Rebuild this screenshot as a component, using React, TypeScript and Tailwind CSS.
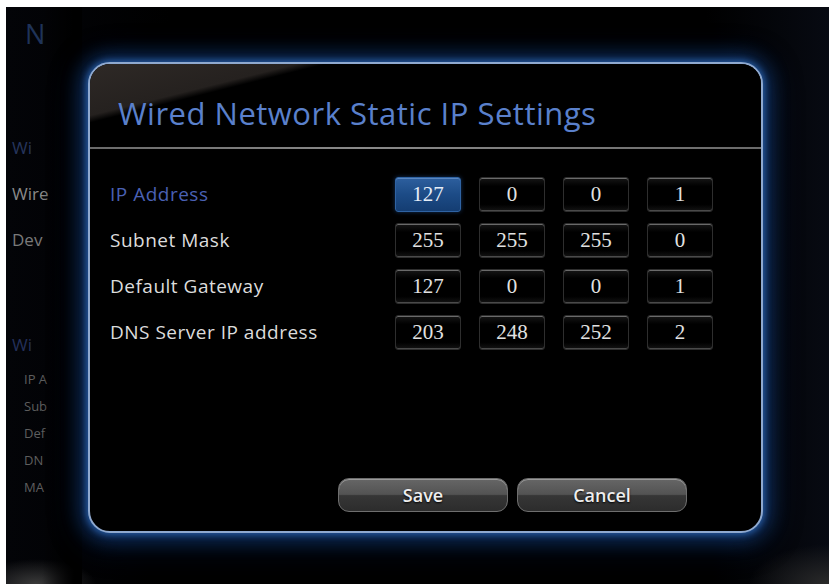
import React from "react";

const rows: { label: string; values: string[]; active?: boolean }[] = [
  { label: "IP Address", values: ["127", "0", "0", "1"], active: true },
  { label: "Subnet Mask", values: ["255", "255", "255", "0"] },
  { label: "Default Gateway", values: ["127", "0", "0", "1"] },
  { label: "DNS Server IP address", values: ["203", "248", "252", "2"] },
];

function Box({ value, selected }: { value: string; selected?: boolean }) {
  return (
    <div
      className={
        selected
          ? "h-[35px] rounded-[3px] border border-[#2f63a3] bg-[linear-gradient(#2d5f9e,#1c4b86_50%,#143d72)] shadow-[inset_0_1px_0_#5a86c0,0_0_4px_rgba(40,100,180,0.5)] flex items-center justify-center text-[21px] text-[#e6eef8] font-['Liberation_Serif',serif]"
          : "h-[35px] rounded-[3px] border border-[#2e2e2e] bg-[linear-gradient(#161616,#000_25%,#000_80%,#141414)] shadow-[inset_0_1px_0_#6a6a6a,inset_0_-1px_0_#4a4a4a] flex items-center justify-center text-[21px] text-[#e2e2e2] font-['Liberation_Serif',serif]"
      }
    >
      {value}
    </div>
  );
}

export default function App() {
  return (
    <div className="w-[829px] h-[584px] bg-white pt-[7px] pl-[6px] overflow-hidden">
      <div className="relative h-full w-full overflow-hidden bg-[radial-gradient(ellipse_60px_25px_at_30px_100%,#3a3a3a,transparent),radial-gradient(ellipse_80px_40px_at_100%_100%,#2a2a2a,transparent),linear-gradient(90deg,#030408,#000_20%,#000_85%,#070a12)]">
        {/* background sidebar (partially hidden behind dialog) */}
        <div className="w-[70px] pl-[6px] flex flex-col font-['Open_Sans',sans-serif] whitespace-nowrap">
          <div className="mt-[12px] h-[30px] leading-[30px] text-[27px] pl-[13px] text-[#1f3358]">N</div>
          <div className="mt-[87px] h-[24px] leading-[24px] text-[17px] text-[#26355c]">Wi</div>
          <div className="mt-[22px] h-[24px] leading-[24px] text-[17px] text-[#8a8a8a]">Wire</div>
          <div className="mt-[22px] h-[24px] leading-[24px] text-[17px] text-[#7a7a7a]">Dev</div>
          <div className="mt-[81px] h-[24px] leading-[24px] text-[17px] text-[#24305a]">Wi</div>
          <div className="mt-[9px] flex flex-col pl-[12px] text-[13px] text-[#5e5e5e]">
            <div className="h-[27px] leading-[27px]">IP A</div>
            <div className="h-[27px] leading-[27px]">Sub</div>
            <div className="h-[27px] leading-[27px]">Def</div>
            <div className="h-[27px] leading-[27px]">DN</div>
            <div className="h-[27px] leading-[27px]">MA</div>
          </div>
        </div>
        {/* fade of sidebar text into the dialog glow */}
        <div className="absolute left-[36px] top-0 h-full w-[40px] bg-[linear-gradient(90deg,transparent,#000_80%)]" />

        {/* dialog */}
        <div className="absolute left-[82px] top-[55px] w-[675px] h-[471px] rounded-[22px] border-2 border-[#8fa9cf] bg-black shadow-[0_0_6px_2px_rgba(60,130,220,0.55),0_0_18px_8px_rgba(25,80,160,0.45),0_4px_30px_10px_rgba(15,50,110,0.35)] overflow-hidden flex flex-col font-['Open_Sans',sans-serif]">
          <div className="h-[83px] shrink-0 pl-[28px] pt-[29px] bg-[linear-gradient(166deg,#2e2926_0,#25211f_50px,#000_57px)]">
            <div className="text-[31px] leading-[40px] text-[#5a80cc] tracking-[0.5px]">
              Wired Network Static IP Settings
            </div>
          </div>
          <div className="h-[2px] shrink-0 bg-[linear-gradient(90deg,#6a6a6a,#8a8a8a_40%,#6a6a6a)]" />
          <div className="flex-1 flex flex-col pt-[28px] pl-[20px]">
            <div className="grid grid-cols-[267px_repeat(4,66px)] gap-x-[18px] gap-y-[11px]">
              {rows.map((r) => (
                <React.Fragment key={r.label}>
                  <div
                    className={
                      r.active
                        ? "h-[35px] flex items-center text-[19px] tracking-[0.5px] text-[#4a60b4]"
                        : "h-[35px] flex items-center text-[19px] tracking-[0.5px] text-[#dcdcdc]"
                    }
                  >
                    {r.label}
                  </div>
                  {r.values.map((v, i) => (
                    <Box key={i} value={v} selected={r.active && i === 0} />
                  ))}
                </React.Fragment>
              ))}
            </div>
            <div className="mt-[128px] ml-[228px] flex gap-[9px]">
              <button className="w-[170px] h-[34px] rounded-[11px] border border-[#6e6e6e] bg-[linear-gradient(#666,#535353_48%,#363636_52%,#2c2c2c)] shadow-[inset_0_1px_0_#9a9a9a] text-[18px] font-semibold text-[#eeeeee] [text-shadow:0_1px_2px_#000]">
                Save
              </button>
              <button className="w-[170px] h-[34px] rounded-[11px] border border-[#6e6e6e] bg-[linear-gradient(#666,#535353_48%,#363636_52%,#2c2c2c)] shadow-[inset_0_1px_0_#9a9a9a] text-[18px] font-semibold text-[#eeeeee] [text-shadow:0_1px_2px_#000]">
                Cancel
              </button>
            </div>
          </div>
        </div>
      </div>
    </div>
  );
}
